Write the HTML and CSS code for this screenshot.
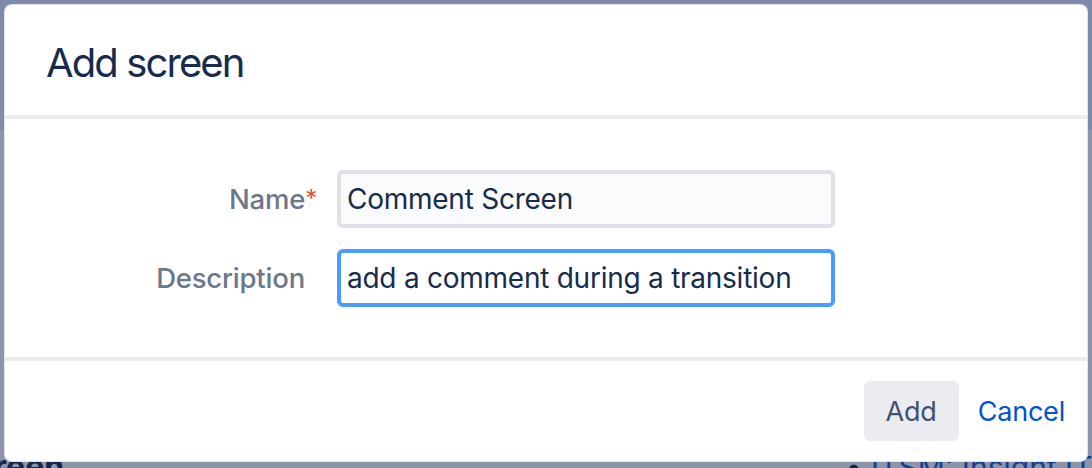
FILE: index.html
```html
<!DOCTYPE html>
<html lang="en">
<head>
<meta charset="utf-8">
<title>Add screen</title>
<link rel="stylesheet" href="styles.css">
</head>
<body>
<div class="backdrop">
  <div class="dialog">
    <header class="dialog-header">
      <h2 class="dialog-title">Add screen</h2>
    </header>
    <div class="dialog-body">
      <form class="form">
        <div class="field">
          <label class="label" for="name">Name<span class="req">*</span></label>
          <input class="input" id="name" type="text" value="Comment Screen">
        </div>
        <div class="field">
          <label class="label" for="desc">Description</label>
          <input class="input input-focus" id="desc" type="text" value="add a comment during a transition">
        </div>
      </form>
    </div>
    <footer class="dialog-footer">
      <button class="btn" type="button">Add</button>
      <a class="link" href="#">Cancel</a>
    </footer>
  </div>
  <div class="behind">
    <span class="behind-left">creen</span>
    <span class="behind-right"><span class="bullet">•</span>ITSM: Insight ITSM</span>
  </div>
</div>
</body>
</html>
```
FILE: styles.css
```css
* { box-sizing: border-box; }
html, body { margin: 0; padding: 0; }
body {
  width: 1092px;
  height: 468px;
  overflow: hidden;
  font-family: Inter, "Noto Sans", "Liberation Sans", sans-serif;
  background: linear-gradient(to bottom, #7d8aa9 0, #7d8aa9 130px, #8d93a8 130px, #8d93a8 100%);
}
.backdrop {
  padding: 5px 5px 0 5px;
  display: flex;
  flex-direction: column;
}
.dialog {
  position: relative;
  z-index: 1;
  width: 1082px;
  height: 456px;
  background: #fff;
  border-radius: 7px;
  box-shadow: 0 0 0 1px #e3e5ea;
  display: flex;
  flex-direction: column;
  overflow: hidden;
  flex: none;
}
.dialog-header {
  height: 114px;
  padding-left: 41px;
  padding-top: 4px;
  display: flex;
  align-items: center;
  border-bottom: 4px solid #ebecf0;
  flex: none;
}
.dialog-title {
  margin: 0;
  font-size: 40px;
  font-weight: 400;
  letter-spacing: -1.9px;
  color: #172b4d;
}
.dialog-body {
  height: 242px;
  padding-top: 51px;
  border-bottom: 4px solid #ebecf0;
  flex: none;
}
.form {
  display: flex;
  flex-direction: column;
  gap: 21px;
}
.field {
  display: flex;
  align-items: center;
  gap: 32px;
}
.label {
  width: 300px;
  text-align: right;
  font-size: 27.5px;
  font-weight: 500;
  color: #6b778c;
  letter-spacing: -0.2px;
}
.req {
  color: #e5522f;
  margin-right: -12px;
  font-weight: 400;
  font-size: 24px;
  vertical-align: 2px;
}
.input {
  width: 498px;
  height: 58px;
  border: 4px solid #dfe1e6;
  border-radius: 6px;
  background: #fafbfc;
  padding: 0 6px;
  font-family: inherit;
  font-size: 28px;
  letter-spacing: -0.25px;
  color: #172b4d;
  outline: none;
}
.input-focus {
  border-color: #4c9aff;
  background: #fff;
}
.dialog-footer {
  flex: 1;
  display: flex;
  justify-content: flex-end;
  align-items: center;
  padding-right: 22px;
  gap: 19px;
}
.btn {
  width: 95px;
  height: 60px;
  border: none;
  border-radius: 6px;
  background: #ebecf0;
  color: #42526e;
  font-family: inherit;
  font-size: 27px;
  letter-spacing: -0.2px;
  padding: 0;
}
.link {
  color: #0052cc;
  text-decoration: none;
  font-size: 27px;
  letter-spacing: -0.2px;
}
.behind {
  display: flex;
  align-items: flex-start;
  margin-left: -5px;
  height: 7px;
  overflow: visible;
  white-space: nowrap;
}
.behind-left {
  font-size: 32px;
  line-height: 1;
  font-weight: 700;
  color: #15264a;
  margin-left: -25px;
  margin-top: -10px;
}
.behind-right {
  font-size: 30px;
  line-height: 1;
  color: #153e8c;
  margin-left: 781px;
  margin-top: -9px;
}
.bullet {
  color: #15264a;
  margin-right: 9px;
}
```
